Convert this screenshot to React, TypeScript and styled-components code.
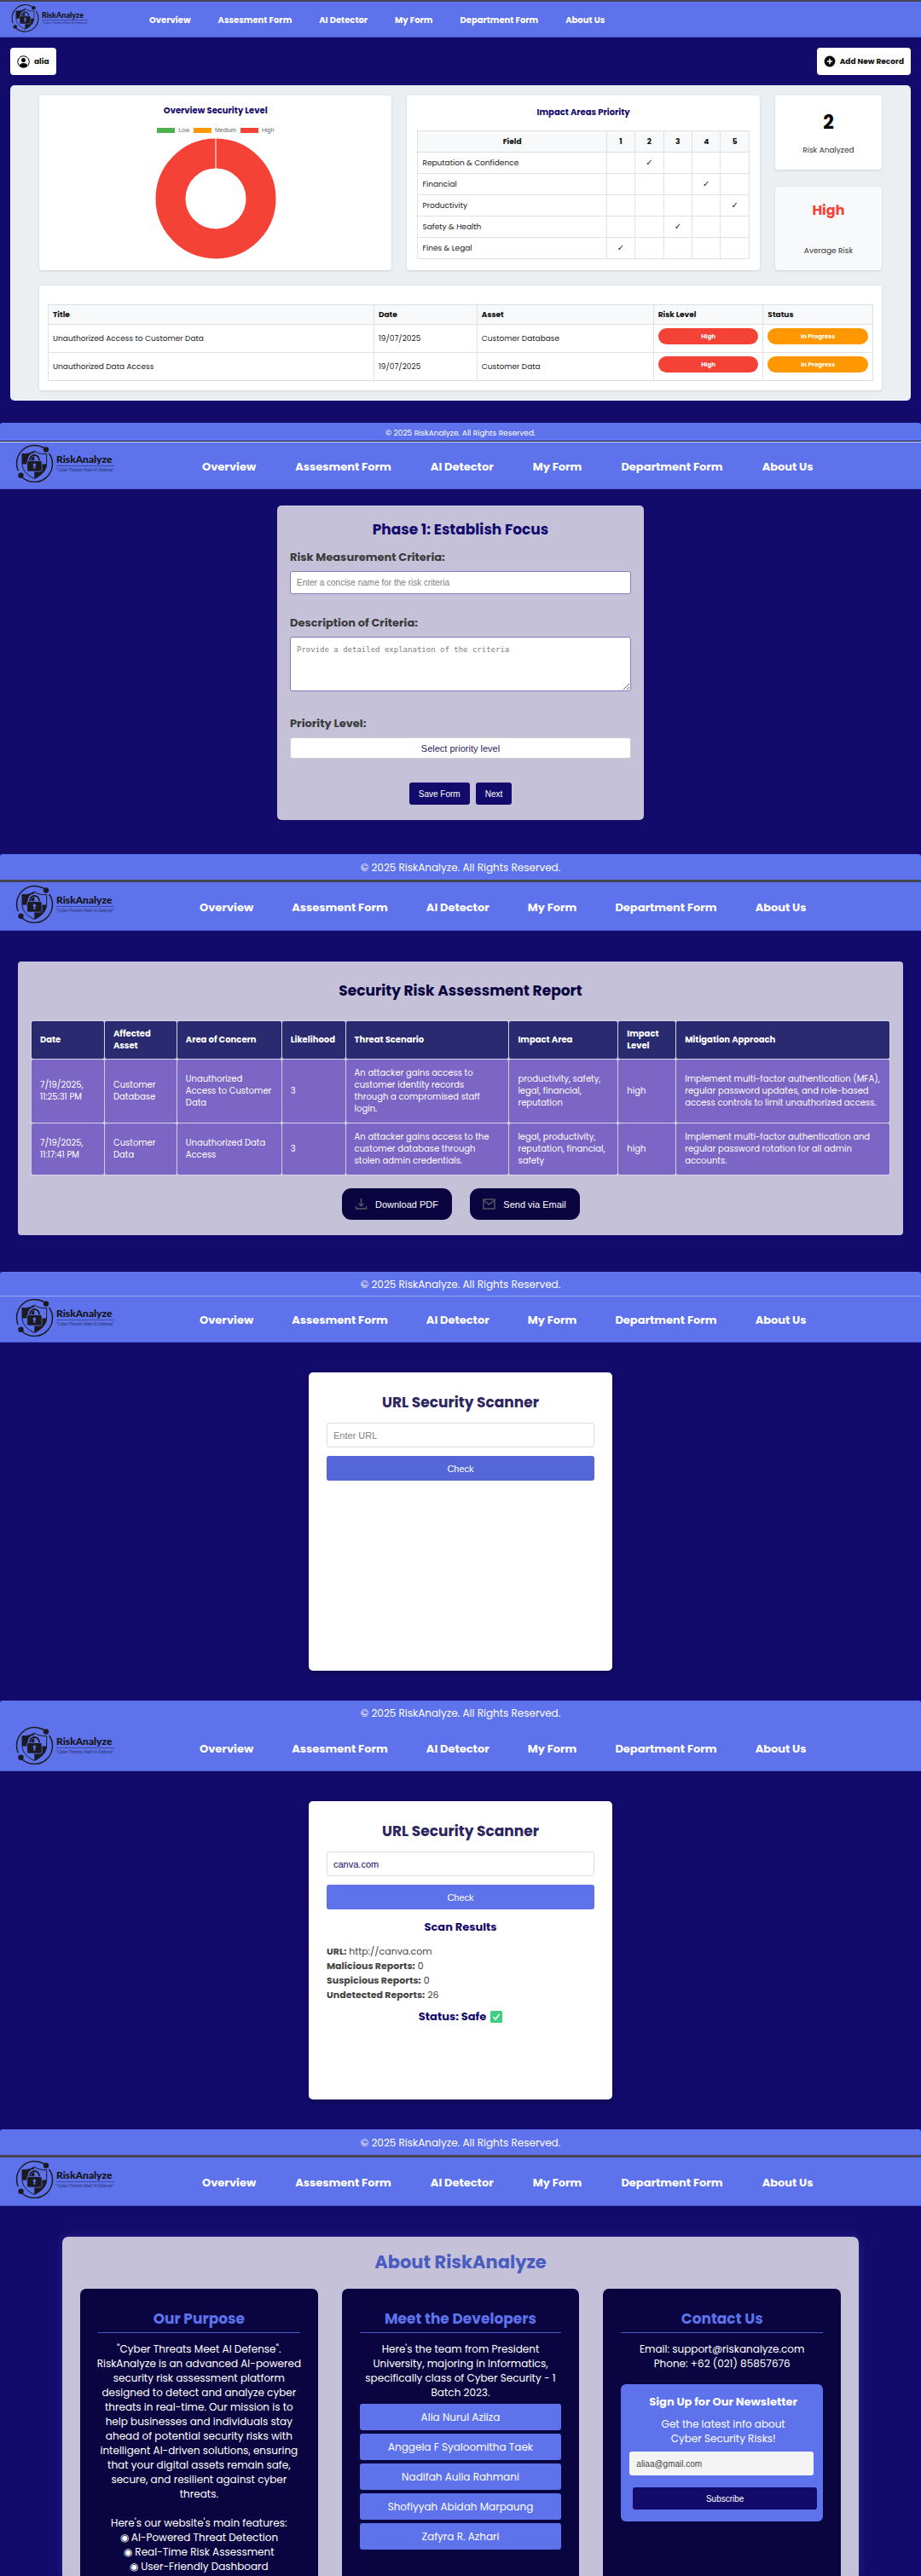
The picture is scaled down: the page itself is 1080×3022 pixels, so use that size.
import React from "react";
import styled, { createGlobalStyle } from "styled-components";

const color = {
  navy: "#130b6b",
  ink: "#0a0540",
  blue: "#5e72eb",
  lilac: "#c4c1d9",
  red: "#f44336",
  orange: "#ff9800",
  green: "#4caf50",
};

const sans = `Poppins, Inter, "Open Sans", sans-serif`;
const arial = `"Liberation Sans", Arial, sans-serif`;
const mono = `"DejaVu Sans Mono", "Liberation Mono", monospace`;

const GlobalStyle = createGlobalStyle`
  *, *::before, *::after { box-sizing: border-box; }
  body { margin: 0; background: ${color.navy}; font-family: ${sans}; }
  h1, h2, h3, p, ul { margin: 0; padding: 0; }
  ul { list-style: none; }
`;

/* ---------- shared frame ---------- */

type Size = "compact" | "snug" | "regular";

const Screen = styled.section`
  display: flex;
  flex-direction: column;
`;

const Divider = styled.div<{ $height: number; $color: string }>`
  height: ${(p) => p.$height}px;
  background: ${(p) => p.$color};
`;

const barGap = { compact: 76, snug: 99, regular: 102 };
const navGap = { compact: 32, snug: 45, regular: 46 };

const Bar = styled.header<{ $height: number; $size: Size }>`
  display: flex;
  align-items: center;
  gap: ${(p) => barGap[p.$size]}px;
  min-height: ${(p) => p.$height}px;
  padding: 0 ${(p) => (p.$size === "compact" ? 13 : 18)}px;
  background: ${color.blue};
  box-shadow: inset 0 -1px #4858cc;
`;

const Brand = styled.a<{ $compact?: boolean }>`
  display: flex;
  align-items: center;
  gap: 3px;
  width: ${(p) => (p.$compact ? 86 : 117)}px;
  padding-bottom: ${(p) => (p.$compact ? 4 : 6)}px;
  color: #111;
  text-decoration: none;
`;

const BrandMark = styled.svg<{ $compact?: boolean }>`
  flex: none;
  width: ${(p) => (p.$compact ? 33 : 45)}px;
  height: ${(p) => (p.$compact ? 34 : 45)}px;
`;

const BrandText = styled.span`
  display: flex;
  flex-direction: column;
  white-space: nowrap;
`;

const BrandName = styled.span<{ $compact?: boolean }>`
  font: 900 ${(p) => (p.$compact ? "9px/11px" : "12px/14px")} Lato, sans-serif;
  border-bottom: 1px solid #3d4a9c;
`;

const BrandTag = styled.span<{ $compact?: boolean }>`
  font: italic ${(p) => (p.$compact ? "4px/6px" : "5px/8px")} Lato, sans-serif;
  color: #26306e;
`;

const Nav = styled.nav<{ $size: Size }>`
  display: flex;
  flex-wrap: wrap;
  gap: ${(p) => navGap[p.$size]}px;
  padding-top: 2px;
`;

const NavLink = styled.a<{ $compact?: boolean }>`
  color: #fff;
  font-weight: 700;
  font-size: ${(p) => (p.$compact ? 10 : 13)}px;
  line-height: 16px;
  text-decoration: none;
  white-space: nowrap;
`;

const FooterBar = styled.footer<{ $height: number; $compact?: boolean }>`
  display: flex;
  align-items: center;
  justify-content: center;
  min-height: ${(p) => p.$height}px;
  padding-top: 2px;
  border-radius: 3px 3px 0 0;
  background: ${color.blue};
  color: #fff;
  font-size: ${(p) => (p.$compact ? 9 : 12)}px;
  line-height: 16px;
`;

const Main = styled.main<{ $top: number; $bottom: number; $side?: number }>`
  padding: ${(p) => p.$top}px ${(p) => p.$side ?? 20}px ${(p) => p.$bottom}px;
`;

const Logo = ({ compact }: { compact?: boolean }) => (
  <Brand href="#" $compact={compact}>
    <BrandMark $compact={compact} viewBox="0 0 45 45" aria-hidden="true">
      <g fill="none" stroke="#1b1b1f" strokeWidth="1.5" strokeLinecap="round">
        <path d="M3 30.500A21.300 21.300 0 0 1 33 4" />
        <path d="M40 11.500A21.300 21.300 0 0 1 8.500 39.500" />
      </g>
      <circle cx="36" cy="6.500" r="3.200" fill="#1b1b1f" />
      <circle cx="6.500" cy="36.800" r="3.200" fill="#1b1b1f" />
      <path
        d="M22.300 8C18 11 13 12 8 11.500V23C8 31 14.500 37 22.300 40.500C30 37 36.700 31 36.700 23V11.500C31.500 12 26.500 11 22.300 8Z"
        fill="none"
        stroke="#1b1b1f"
        strokeWidth="1"
      />
      <path d="M22.300 8C18 11 13 12 8 11.500V23.500H22.300Z" fill="#1b1b1f" />
      <path d="M22.300 23.500H36.700C36.500 31 30 37 22.300 40.500Z" fill="#1b1b1f" />
      <path
        d="M16.500 20V18.500a6 6 0 0 1 12 0V20"
        fill="none"
        stroke={color.blue}
        strokeWidth="4"
      />
      <path
        d="M17 21V18.500a5.500 5.500 0 0 1 11 0V21"
        fill="none"
        stroke="#1b1b1f"
        strokeWidth="1.800"
      />
      <rect
        x="13.700"
        y="19.500"
        width="17.400"
        height="12.600"
        rx="1.800"
        fill="#1b1b1f"
        stroke={color.blue}
        strokeWidth="0.800"
      />
      <circle cx="22.400" cy="24.300" r="1.700" fill={color.blue} />
      <path d="M21.800 24.500h1.200l0.500 4.300h-2.200z" fill={color.blue} />
    </BrandMark>
    <BrandText>
      <BrandName $compact={compact}>RiskAnalyze</BrandName>
      <BrandTag $compact={compact}>"Cyber Threats Meet AI Defense"</BrandTag>
    </BrandText>
  </Brand>
);

const links = [
  "Overview",
  "Assesment Form",
  "AI Detector",
  "My Form",
  "Department Form",
  "About Us",
];

const Header = ({ height, size = "regular" }: { height: number; size?: Size }) => (
  <Bar $height={height} $size={size}>
    <Logo compact={size === "compact"} />
    <Nav $size={size}>
      {links.map((l) => (
        <NavLink key={l} href="#" $compact={size === "compact"}>
          {l}
        </NavLink>
      ))}
    </Nav>
  </Bar>
);

const Footer = ({ height, compact }: { height: number; compact?: boolean }) => (
  <FooterBar $height={height} $compact={compact}>
    © 2025 RiskAnalyze. All Rights Reserved.
  </FooterBar>
);

/* ---------- overview ---------- */

const Toolbar = styled.div`
  display: flex;
  justify-content: space-between;
  margin-bottom: 12px;
`;

const ToolButton = styled.button`
  display: flex;
  align-items: center;
  gap: 5px;
  height: 32px;
  padding: 0 8px;
  border: 0;
  border-radius: 4px;
  background: #fff;
  color: #111;
  font: 700 9px ${sans};
`;

const Board = styled.div`
  display: flex;
  flex-direction: column;
  gap: 18px;
  padding: 12px 34px;
  border-radius: 5px;
  background: #ebeff2;
`;

const Widgets = styled.div`
  display: grid;
  grid-template-columns: 413fr 413fr 125fr;
  gap: 18px;
`;

const Card = styled.div<{ $muted?: boolean }>`
  display: flex;
  flex-direction: column;
  align-items: center;
  border-radius: 4px;
  background: ${(p) => (p.$muted ? "#f8f9fa" : "#fff")};
  box-shadow: 0 1px 3px rgba(0, 0, 0, 0.12);
`;

const ChartCard = styled(Card)`
  padding: 10px 12px 12px;
`;

const PriorityCard = styled(Card)`
  padding: 12px 12px 13px;
`;

const CardTitle = styled.h2`
  color: ${color.navy};
  font-size: 10px;
  line-height: 16px;
  font-weight: 700;
`;

const Legend = styled.ul`
  display: flex;
  gap: 5px;
  margin-top: 10px;
  color: #666;
  font: 7px/10px ${arial};
`;

const LegendItem = styled.li<{ $swatch: string }>`
  display: flex;
  align-items: center;
  gap: 4px;
  &::before {
    content: "";
    width: 21px;
    height: 6px;
    background: ${(p) => p.$swatch};
  }
`;

const Donut = styled.svg`
  width: 142px;
  height: 142px;
  margin-top: 4px;
`;

const GridTable = styled.table`
  width: 100%;
  border-collapse: collapse;
  table-layout: fixed;
  color: #222;
  font-size: 9px;
  line-height: 12px;
  th,
  td {
    border: 1px solid #dfe2e4;
  }
  th {
    background: #f8f9fa;
    color: #111;
    font-weight: 700;
  }
`;

const PriorityTable = styled(GridTable)`
  margin-top: 13px;
  th,
  td {
    height: 25px;
    padding: 0 5px;
    text-align: center;
  }
  td:first-child {
    text-align: left;
  }
  td + td {
    font-family: "DejaVu Sans", sans-serif;
    font-size: 10px;
  }
`;

const Col = styled.col<{ $w: number }>`
  width: ${(p) => p.$w}%;
`;

const Stats = styled.div`
  display: flex;
  flex-direction: column;
  gap: 20px;
`;

const StatCard = styled(Card)<{ $tall?: boolean }>`
  justify-content: space-between;
  height: ${(p) => (p.$tall ? 98 : 87)}px;
  padding: 16px 8px;
`;

const StatValue = styled.strong<{ $alert?: boolean }>`
  color: ${(p) => (p.$alert ? color.red : "#000")};
  font-size: ${(p) => (p.$alert ? 16 : 22)}px;
  line-height: ${(p) => (p.$alert ? 24 : 32)}px;
`;

const StatLabel = styled.span`
  color: #333;
  font-size: 9px;
  line-height: 14px;
`;

const RecordsCard = styled(Card)`
  padding: 22px 10px 11px;
`;

const RecordsTable = styled(GridTable)`
  th,
  td {
    padding: 0 5px;
    text-align: left;
  }
  th {
    height: 23px;
  }
  td {
    height: 33px;
  }
`;

const PillCell = styled.td`
  vertical-align: top;
`;

const Pill = styled.span<{ $bg: string }>`
  display: block;
  margin-top: 4px;
  border-radius: 10px;
  background: ${(p) => p.$bg};
  color: #fff;
  font-size: 7px;
  font-weight: 700;
  line-height: 19px;
  text-align: center;
`;

const priorities: [string, number][] = [
  ["Reputation & Confidence", 2],
  ["Financial", 4],
  ["Productivity", 5],
  ["Safety & Health", 3],
  ["Fines & Legal", 1],
];

const records = [
  ["Unauthorized Access to Customer Data", "19/07/2025", "Customer Database"],
  ["Unauthorized Data Access", "19/07/2025", "Customer Data"],
];

const levels = [1, 2, 3, 4, 5];

const Overview = () => (
  <Screen>
    <Divider $height={2} $color="#454552" />
    <Header height={42} size="compact" />
    <Main $top={12} $bottom={26} $side={12}>
      <Toolbar>
        <ToolButton type="button">
          <svg width="15" height="15" viewBox="0 0 24 24" aria-hidden="true">
            <circle cx="12" cy="12" r="10.800" fill="#fff" stroke="#000" strokeWidth="1.600" />
            <circle cx="12" cy="8.800" r="4" />
            <path d="M4.500 19.500C5.500 15.500 8 14.500 12 14.500s6.500 1 7.500 5A10.800 10.800 0 0 1 4.500 19.500Z" />
          </svg>
          alia
        </ToolButton>
        <ToolButton type="button">
          <svg width="14" height="14" viewBox="0 0 24 24" aria-hidden="true">
            <circle cx="12" cy="12" r="11" />
            <path d="M12 6.500v11M6.500 12h11" stroke="#fff" strokeWidth="2.600" />
          </svg>
          Add New Record
        </ToolButton>
      </Toolbar>
      <Board>
        <Widgets>
          <ChartCard>
            <CardTitle>Overview Security Level</CardTitle>
            <Legend>
              <LegendItem $swatch={color.green}>Low</LegendItem>
              <LegendItem $swatch={color.orange}>Medium</LegendItem>
              <LegendItem $swatch={color.red}>High</LegendItem>
            </Legend>
            <Donut viewBox="0 0 142 142" role="img" aria-label="Risk level chart">
              <circle cx="71" cy="71" r="53" fill="none" stroke={color.red} strokeWidth="35" />
              <path d="M71 0v36" stroke="#fff" />
            </Donut>
          </ChartCard>
          <PriorityCard>
            <CardTitle>Impact Areas Priority</CardTitle>
            <PriorityTable>
              <colgroup>
                <Col $w={57} />
                {levels.map((n) => (
                  <col key={n} />
                ))}
              </colgroup>
              <thead>
                <tr>
                  <th>Field</th>
                  {levels.map((n) => (
                    <th key={n}>{n}</th>
                  ))}
                </tr>
              </thead>
              <tbody>
                {priorities.map(([name, level]) => (
                  <tr key={name}>
                    <td>{name}</td>
                    {levels.map((n) => (
                      <td key={n}>{n === level ? "✓" : ""}</td>
                    ))}
                  </tr>
                ))}
              </tbody>
            </PriorityTable>
          </PriorityCard>
          <Stats>
            <StatCard>
              <StatValue>2</StatValue>
              <StatLabel>Risk Analyzed</StatLabel>
            </StatCard>
            <StatCard $muted $tall>
              <StatValue $alert>High</StatValue>
              <StatLabel>Average Risk</StatLabel>
            </StatCard>
          </Stats>
        </Widgets>
        <RecordsCard>
          <RecordsTable>
            <colgroup>
              <Col $w={39.5} />
              <Col $w={12.5} />
              <Col $w={21.4} />
              <Col $w={13.3} />
              <Col $w={13.3} />
            </colgroup>
            <thead>
              <tr>
                <th>Title</th>
                <th>Date</th>
                <th>Asset</th>
                <th>Risk Level</th>
                <th>Status</th>
              </tr>
            </thead>
            <tbody>
              {records.map((r) => (
                <tr key={r[0]}>
                  {r.map((cell) => (
                    <td key={cell}>{cell}</td>
                  ))}
                  <PillCell>
                    <Pill $bg={color.red}>High</Pill>
                  </PillCell>
                  <PillCell>
                    <Pill $bg={color.orange}>In Progress</Pill>
                  </PillCell>
                </tr>
              ))}
            </tbody>
          </RecordsTable>
        </RecordsCard>
      </Board>
    </Main>
    <Footer height={21} compact />
  </Screen>
);

/* ---------- assessment form ---------- */

const FormCard = styled.form`
  display: flex;
  flex-direction: column;
  max-width: 430px;
  margin: 0 auto;
  padding: 15px 15px 18px;
  border-radius: 5px;
  background: ${color.lilac};
`;

const FormTitle = styled.h1`
  margin-bottom: 10px;
  color: ${color.navy};
  font-size: 17px;
  line-height: 26px;
  font-weight: 700;
  text-align: center;
`;

const Label = styled.label`
  margin-bottom: 6px;
  color: #3a3a3a;
  font-size: 13px;
  line-height: 20px;
  font-weight: 700;
`;

const TextInput = styled.input`
  height: 27px;
  margin-bottom: 24px;
  padding: 0 7px;
  border: 1px solid #8878b8;
  border-radius: 3px;
  font: 10px ${arial};
  &::placeholder {
    color: #808080;
  }
`;

const TextArea = styled.textarea`
  height: 64px;
  margin-bottom: 28px;
  padding: 8px 7px;
  border: 1px solid #8878b8;
  border-radius: 3px;
  font: 9px/12px ${mono};
  &::placeholder {
    color: #808080;
  }
`;

const Select = styled.select`
  appearance: none;
  height: 25px;
  margin-bottom: 28px;
  border: 1px solid #ccc;
  border-radius: 3px;
  background: #fff;
  color: #2b2560;
  font: 11px ${arial};
  text-align: center;
  text-align-last: center;
`;

const FormActions = styled.div`
  display: flex;
  justify-content: center;
  gap: 7px;
`;

const FormButton = styled.button`
  height: 26px;
  padding: 0 11px;
  border: 0;
  border-radius: 3px;
  background: ${color.navy};
  color: #fff;
  font: 10px ${arial};
`;

const AssessmentForm = () => (
  <Screen>
    <Header height={55} />
    <Main $top={19} $bottom={40}>
      <FormCard>
        <FormTitle>Phase 1: Establish Focus</FormTitle>
        <Label htmlFor="criteria">Risk Measurement Criteria:</Label>
        <TextInput id="criteria" placeholder="Enter a concise name for the risk criteria" />
        <Label htmlFor="description">Description of Criteria:</Label>
        <TextArea
          id="description"
          placeholder="Provide a detailed explanation of the criteria"
        />
        <Label htmlFor="priority">Priority Level:</Label>
        <Select id="priority" defaultValue="">
          <option value="">Select priority level</option>
        </Select>
        <FormActions>
          <FormButton type="button">Save Form</FormButton>
          <FormButton type="button">Next</FormButton>
        </FormActions>
      </FormCard>
    </Main>
    <Footer height={30} />
  </Screen>
);

/* ---------- report ---------- */

const ReportCard = styled.div`
  padding: 19px 15px 18px;
  border-radius: 4px;
  background: ${color.lilac};
`;

const ReportTitle = styled.h1`
  margin-bottom: 20px;
  color: ${color.ink};
  font-size: 17px;
  line-height: 30px;
  font-weight: 700;
  text-align: center;
`;

const ReportTable = styled.table`
  width: 100%;
  border-collapse: separate;
  border-spacing: 1px;
  table-layout: fixed;
  background: #d3cfe4;
  color: #fff;
  th,
  td {
    padding: 8px 10px;
    border-radius: 2px;
    font-size: 10px;
    line-height: 14px;
    text-align: left;
  }
  th {
    background: #2a2a70;
    font-weight: 700;
    white-space: pre-line;
  }
  td {
    background: #7b66c6;
    padding: 9px 10px;
    white-space: pre-line;
  }
`;

const ReportActions = styled.div`
  display: flex;
  justify-content: center;
  gap: 21px;
  margin-top: 15px;
`;

const ReportButton = styled.button`
  display: flex;
  align-items: center;
  justify-content: center;
  gap: 9px;
  width: 129px;
  height: 37px;
  border: 0;
  border-radius: 11px;
  background: ${color.ink};
  color: #fff;
  font: 11px ${arial};
`;

const reportWidths = [8.5, 8.4, 12.2, 7.4, 19.1, 12.7, 6.7, 25];

const reportHead = [
  "Date",
  "Affected\nAsset",
  "Area of Concern",
  "Likelihood",
  "Threat Scenario",
  "Impact Area",
  "Impact\nLevel",
  "Mitigation Approach",
];

const reportRows = [
  [
    "7/19/2025,\n11:25:31 PM",
    "Customer\nDatabase",
    "Unauthorized\nAccess to Customer\nData",
    "3",
    "An attacker gains access to\ncustomer identity records\nthrough a compromised staff\nlogin.",
    "productivity, safety,\nlegal, financial,\nreputation",
    "high",
    "Implement multi-factor authentication (MFA),\nregular password updates, and role-based\naccess controls to limit unauthorized access.",
  ],
  [
    "7/19/2025,\n11:17:41 PM",
    "Customer\nData",
    "Unauthorized Data\nAccess",
    "3",
    "An attacker gains access to the\ncustomer database through\nstolen admin credentials.",
    "legal, productivity,\nreputation, financial,\nsafety",
    "high",
    "Implement multi-factor authentication and\nregular password rotation for all admin\naccounts.",
  ],
];

const Report = () => (
  <Screen>
    <Header height={57} size="snug" />
    <Main $top={36} $bottom={43} $side={21}>
      <ReportCard>
        <ReportTitle>Security Risk Assessment Report</ReportTitle>
        <ReportTable>
          <colgroup>
            {reportWidths.map((w, i) => (
              <Col key={i} $w={w} />
            ))}
          </colgroup>
          <thead>
            <tr>
              {reportHead.map((h) => (
                <th key={h}>{h}</th>
              ))}
            </tr>
          </thead>
          <tbody>
            {reportRows.map((row) => (
              <tr key={row[0]}>
                {row.map((cell, i) => (
                  <td key={i}>{cell}</td>
                ))}
              </tr>
            ))}
          </tbody>
        </ReportTable>
        <ReportActions>
          <ReportButton type="button">
            <svg width="15" height="15" viewBox="0 0 15 15" fill="none" stroke="#555a60" strokeWidth="1.400" aria-hidden="true">
              <path d="M7.500 1v8.500M4.500 6.800l3 3 3-3M1.500 10v3h12v-3" />
            </svg>
            Download PDF
          </ReportButton>
          <ReportButton type="button">
            <svg width="15" height="15" viewBox="0 0 15 15" fill="none" stroke="#555a60" strokeWidth="1.400" aria-hidden="true">
              <rect x="1" y="2" width="13" height="11" />
              <path d="M1 3l6.500 5L14 3" />
            </svg>
            Send via Email
          </ReportButton>
        </ReportActions>
      </ReportCard>
    </Main>
    <Footer height={28} />
  </Screen>
);

/* ---------- url scanner ---------- */

const ScannerCard = styled.form`
  display: flex;
  flex-direction: column;
  max-width: 356px;
  min-height: 350px;
  margin: 0 auto;
  padding: 22px 21px;
  border-radius: 5px;
  background: #fff;
  box-shadow: 0 2px 6px rgba(0, 0, 0, 0.3);
`;

const ScannerTitle = styled.h1`
  margin-bottom: 11px;
  color: #2b2560;
  font-size: 17px;
  line-height: 26px;
  font-weight: 700;
  text-align: center;
`;

const UrlInput = styled.input`
  height: 29px;
  margin-bottom: 10px;
  padding: 0 7px;
  border: 1px solid #ddd;
  border-radius: 3px;
  color: ${color.navy};
  font: 11px ${arial};
  &::placeholder {
    color: #808080;
  }
`;

const CheckButton = styled.button<{ $pressed?: boolean }>`
  height: 29px;
  border: 0;
  border-radius: 3px;
  background: ${(p) => (p.$pressed ? "#5566d8" : color.blue)};
  color: #fff;
  font: 11px ${arial};
`;

const ResultTitle = styled.h2`
  display: flex;
  align-items: center;
  justify-content: center;
  gap: 5px;
  margin: 12px 0 11px;
  color: ${color.navy};
  font-size: 13px;
  line-height: 18px;
  font-weight: 700;
`;

const StatusLine = styled(ResultTitle)`
  margin: 8px 0 0;
`;

const ResultLine = styled.p`
  color: #444;
  font-size: 11px;
  line-height: 17px;
`;

const results = [
  ["URL:", "http://canva.com"],
  ["Malicious Reports:", "0"],
  ["Suspicious Reports:", "0"],
  ["Undetected Reports:", "26"],
];

const Scanner = ({
  headerHeight,
  footerHeight,
  url,
}: {
  headerHeight: number;
  footerHeight: number;
  url?: string;
}) => (
  <Screen>
    <Header height={headerHeight} size="snug" />
    <Main $top={35} $bottom={35}>
      <ScannerCard>
        <ScannerTitle>URL Security Scanner</ScannerTitle>
        <UrlInput aria-label="URL" placeholder="Enter URL" defaultValue={url} />
        <CheckButton type="button" $pressed={!url}>
          Check
        </CheckButton>
        {url && (
          <>
            <ResultTitle>Scan Results</ResultTitle>
            {results.map(([name, value]) => (
              <ResultLine key={name}>
                <strong>{name}</strong> {value}
              </ResultLine>
            ))}
            <StatusLine>
              Status: Safe
              <svg width="14" height="14" viewBox="0 0 14 14" role="img" aria-label="Passed">
                <rect width="14" height="14" rx="1.500" fill="#3fcf7f" />
                <path d="M3.500 7.300l2.500 2.700 4.500-6" fill="none" stroke="#fff" strokeWidth="1.500" />
              </svg>
            </StatusLine>
          </>
        )}
      </ScannerCard>
    </Main>
    <Footer height={footerHeight} />
  </Screen>
);

/* ---------- about ---------- */

const AboutPanel = styled.div`
  padding: 14px 21px 0;
  border-radius: 7px 7px 0 0;
  background: ${color.lilac};
  box-shadow: 0 0 12px rgba(94, 80, 200, 0.35);
`;

const AboutTitle = styled.h1`
  margin-bottom: 15px;
  color: #4a5cc0;
  font-size: 21px;
  line-height: 32px;
  font-weight: 700;
  text-align: center;
`;

const Columns = styled.div`
  display: grid;
  grid-template-columns: repeat(3, 1fr);
  gap: 28px;
`;

const Column = styled.article`
  padding: 22px 21px 3px;
  border-radius: 7px 7px 0 0;
  background: ${color.ink};
  color: #fff;
  font-size: 12px;
  line-height: 17px;
  text-align: center;
`;

const ColumnTitle = styled.h2`
  margin-bottom: 10px;
  padding-bottom: 3px;
  border-bottom: 1px solid #4a5cc8;
  color: ${color.blue};
  font-size: 17px;
  line-height: 26px;
  font-weight: 700;
`;

const Copy = styled.p`
  margin: 0 -8px;
  white-space: pre-line;
`;

const Members = styled.ul`
  display: flex;
  flex-direction: column;
  gap: 4px;
  margin-top: 5px;
`;

const Member = styled.li`
  border-radius: 3px;
  background: ${color.blue};
  line-height: 31px;
`;

const Newsletter = styled.form`
  display: flex;
  flex-direction: column;
  margin-top: 16px;
  padding: 11px 7px 14px 10px;
  border-radius: 6px;
  background: ${color.blue};
`;

const NewsletterTitle = styled.h3`
  margin-bottom: 7px;
  font-size: 13px;
  line-height: 20px;
  font-weight: 700;
`;

const EmailInput = styled.input`
  height: 28px;
  margin: 7px 4px 14px 0;
  padding: 0 8px;
  border: 0;
  border-radius: 3px;
  background: #f3f3f3;
  color: #444;
  font: 10px ${arial};
`;

const SubscribeButton = styled.button`
  height: 26px;
  margin-left: 4px;
  border: 0;
  border-radius: 3px;
  background: ${color.navy};
  color: #fff;
  font: 10px ${arial};
`;

const members = [
  "Alia Nurul Aziiza",
  "Anggela F Syaloomitha Taek",
  "Nadifah Aulia Rahmani",
  "Shofiyyah Abidah Marpaung",
  "Zafyra R. Azhari",
];

const purpose = `"Cyber Threats Meet AI Defense".
RiskAnalyze is an advanced AI-powered
security risk assessment platform
designed to detect and analyze cyber
threats in real-time. Our mission is to
help businesses and individuals stay
ahead of potential security risks with
intelligent AI-driven solutions, ensuring
that your digital assets remain safe,
secure, and resilient against cyber
threats.

Here's our website's main features:
◉ AI-Powered Threat Detection
◉ Real-Time Risk Assessment
◉ User-Friendly Dashboard`;

const team = `Here's the team from President
University, majoring in Informatics,
specifically class of Cyber Security - 1
Batch 2023.`;

const About = () => (
  <Screen>
    <Header height={57} />
    <Main $top={36} $bottom={0} $side={73}>
      <AboutPanel>
        <AboutTitle>About RiskAnalyze</AboutTitle>
        <Columns>
          <Column>
            <ColumnTitle>Our Purpose</ColumnTitle>
            <Copy>{purpose}</Copy>
          </Column>
          <Column>
            <ColumnTitle>Meet the Developers</ColumnTitle>
            <Copy>{team}</Copy>
            <Members>
              {members.map((m) => (
                <Member key={m}>{m}</Member>
              ))}
            </Members>
          </Column>
          <Column>
            <ColumnTitle>Contact Us</ColumnTitle>
            <Copy>{"Email: support@riskanalyze.com\nPhone: +62 (021) 85857676"}</Copy>
            <Newsletter>
              <NewsletterTitle>Sign Up for Our Newsletter</NewsletterTitle>
              <Copy>{"Get the latest info about\nCyber Security Risks!"}</Copy>
              <EmailInput type="email" aria-label="Email" defaultValue="aliaa@gmail.com" />
              <SubscribeButton type="button">Subscribe</SubscribeButton>
            </Newsletter>
          </Column>
        </Columns>
      </AboutPanel>
    </Main>
  </Screen>
);

export default function App() {
  return (
    <>
      <GlobalStyle />
      <Overview />
      <Divider $height={1} $color="#0d0d2c" />
      <Divider $height={1} $color="#d8dcf8" />
      <AssessmentForm />
      <Divider $height={3} $color="#454552" />
      <Report />
      <Divider $height={1} $color="#98a5f4" />
      <Scanner headerHeight={54} footerHeight={28} />
      <Scanner headerHeight={55} footerHeight={30} url="canva.com" />
      <Divider $height={3} $color="#454552" />
      <About />
    </>
  );
}
